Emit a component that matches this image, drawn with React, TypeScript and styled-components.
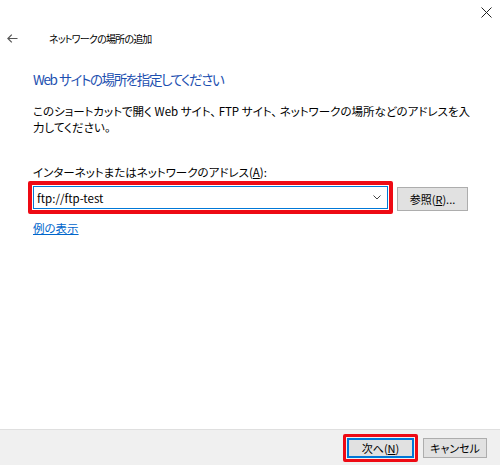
import * as React from 'react';
import styled, { createGlobalStyle } from 'styled-components';

const GlobalStyle = createGlobalStyle`
	html, body {
		margin: 0;
		padding: 0;
		background: #ffffff;
	}
	body {
		font-family: "Noto Sans CJK JP", "Noto Sans", sans-serif;
		font-feature-settings: "palt" 1;
		color: #000000;
	}
`;

const Window = styled.div`
	width: 500px;
	height: 465px;
	display: flex;
	flex-direction: column;
	background: #ffffff;
	overflow: hidden;
`;

const TitleBar = styled.div`
	height: 24px;
	display: flex;
	justify-content: flex-end;
	align-items: center;
	padding-right: 8px;
`;

const CloseButton = styled.div`
	width: 12px;
	height: 12px;
	display: flex;
	align-items: center;
	justify-content: center;
`;

const NavRow = styled.div`
	display: flex;
	align-items: center;
	height: 28px;
	padding-left: 7px;
`;

const BackArrow = styled.div`
	width: 12px;
	display: flex;
	align-items: center;
`;

const WindowTitle = styled.div`
	margin-left: 30px;
	font-size: 10px;
	letter-spacing: -0.8px;
	color: #000000;
`;

const Content = styled.div`
	display: flex;
	flex-direction: column;
	padding: 0 29px 0 33px;
	flex: 1;
`;

const Heading = styled.h1`
	margin: 16px 0 0 0;
	font-size: 13.5px;
	font-weight: normal;
	letter-spacing: -1.4px;
	word-spacing: 1px;
	color: #1c4fb0;
	line-height: 22px;
`;

const Description = styled.p`
	margin: 13px 0 0 0;
	font-size: 11.5px;
	line-height: 16px;
`;

const FieldLabel = styled.div`
	margin-top: 29px;
	font-size: 11.5px;
	line-height: 16px;
`;

const Underlined = styled.span`
	text-decoration: underline;
`;

const FieldRow = styled.div`
	display: flex;
	align-items: center;
	margin-top: 1px;
	margin-left: -5px;
`;

const Highlight = styled.div<{ $border: number }>`
	border: ${({ $border }) => $border}px solid #ee0a14;
	border-radius: 2px;
	padding: 1px;
	display: flex;
`;

const Combo = styled.div`
	width: 355px;
	height: 23px;
	box-sizing: border-box;
	border: 1px solid #0078d7;
	background: #ffffff;
	display: flex;
	align-items: center;
	justify-content: space-between;
	padding: 0 6px 0 3px;
	font-size: 11.5px;
`;

const Button = styled.div<{ $default?: boolean; $width: number }>`
	width: ${({ $width }) => $width}px;
	height: 20px;
	box-sizing: border-box;
	display: flex;
	align-items: center;
	justify-content: center;
	background: #e1e1e1;
	border: 1px solid ${({ $default }) => ($default ? '#0078d7' : '#adadad')};
	box-shadow: ${({ $default }) => ($default ? 'inset 0 0 0 1px #0078d7' : 'none')};
	font-size: 11px;
	color: #000000;
`;

const BrowseButton = styled(Button)`
	margin-left: 4px;
	height: 24px;
	margin-top: 3px;
`;

const ExampleLink = styled.a`
	margin-top: 6px;
	font-size: 11.5px;
	color: #0066cc;
	text-decoration: underline;
	align-self: flex-start;
	line-height: 16px;
`;

const Footer = styled.div`
	height: 35px;
	background: #f0f0f0;
	border-top: 1px solid #dfdfdf;
	display: flex;
	justify-content: flex-end;
	align-items: center;
	padding-right: 13px;
	gap: 5px;
`;

export default function App() {
	return (
		<>
			<GlobalStyle />
			<Window>
				<TitleBar>
					<CloseButton>
						<svg width="11" height="11" viewBox="0 0 11 11">
							<path d="M0.5 0.5 L10.5 10.5 M10.5 0.5 L0.5 10.5" stroke="#222" strokeWidth="1" fill="none" />
						</svg>
					</CloseButton>
				</TitleBar>
				<NavRow>
					<BackArrow>
						<svg width="11" height="9" viewBox="0 0 11 9">
							<path d="M10.5 4.5 H1 M4.8 0.6 L0.9 4.5 L4.8 8.4" stroke="#555" strokeWidth="1.2" fill="none" />
						</svg>
					</BackArrow>
					<WindowTitle>ネットワークの場所の追加</WindowTitle>
				</NavRow>
				<Content>
					<Heading>Web サイトの場所を指定してください</Heading>
					<Description>
						このショートカットで開く Web サイト、 FTP サイト、 ネットワークの場所などのアドレスを入力してください。
					</Description>
					<FieldLabel>
						インターネットまたはネットワークのアドレス(<Underlined>A</Underlined>):
					</FieldLabel>
					<FieldRow>
						<Highlight $border={4}>
							<Combo>
								<span>ftp://ftp-test</span>
								<svg width="8" height="5" viewBox="0 0 8 5">
									<path d="M0.5 0.5 L4 4 L7.5 0.5" stroke="#444" strokeWidth="1" fill="none" />
								</svg>
							</Combo>
						</Highlight>
						<BrowseButton $width={71}>
							参照(<Underlined>R</Underlined>)...
						</BrowseButton>
					</FieldRow>
					<ExampleLink>例の表示</ExampleLink>
				</Content>
				<Footer>
					<Highlight $border={3}>
						<Button $default $width={67}>
							次へ(<Underlined>N</Underlined>)
						</Button>
					</Highlight>
					<Button $width={64}>キャンセル</Button>
				</Footer>
			</Window>
		</>
	);
}
